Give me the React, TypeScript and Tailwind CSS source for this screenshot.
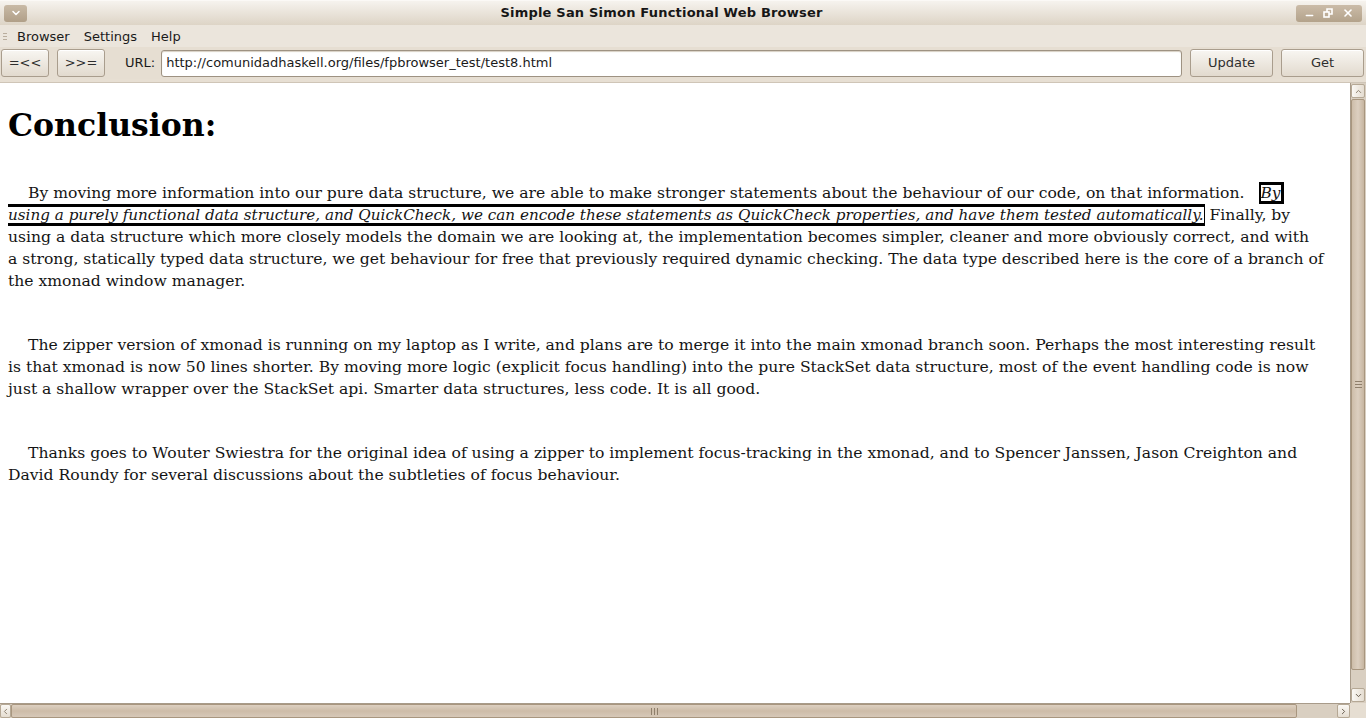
import { ChevronDown, ChevronUp, ChevronLeft, ChevronRight, Minus, X } from 'lucide-react'

const ui = { fontFamily: '"DejaVu Sans", "Liberation Sans", sans-serif' }
const serif = { fontFamily: '"DejaVu Serif", "Liberation Serif", serif' }

const para2 = [
  'The zipper version of xmonad is running on my laptop as I write, and plans are to merge it into the main xmonad branch soon. Perhaps the most interesting result',
  'is that xmonad is now 50 lines shorter. By moving more logic (explicit focus handling) into the pure StackSet data structure, most of the event handling code is now',
  'just a shallow wrapper over the StackSet api. Smarter data structures, less code. It is all good.',
]

const para3 = [
  'Thanks goes to Wouter Swiestra for the original idea of using a zipper to implement focus-tracking in the xmonad, and to Spencer Janssen, Jason Creighton and',
  'David Roundy for several discussions about the subtleties of focus behaviour.',
]

function Btn({ label, className }: { label: string; className: string }) {
  return (
    <button className={`h-[28px] rounded-[3px] border border-[#a99d8d] bg-gradient-to-b from-[#f8f6f2] to-[#e2dace] text-[13px] text-[#2e2e2e] shadow-[inset_0_1px_0_#fff] ${className}`}>
      {label}
    </button>
  )
}

function Line({ children, indent }: { children: React.ReactNode; indent?: boolean }) {
  return <div className={`h-[22px] leading-[22px] whitespace-nowrap ${indent ? 'pl-[20px]' : ''}`}>{children}</div>
}

export default function App() {
  return (
    <div className="w-[1366px] h-[718px] flex flex-col bg-[#e7dfd3] overflow-hidden text-[#1a1a1a]" style={ui}>
      {/* title bar */}
      <div className="h-[25px] flex items-center px-[4px] bg-gradient-to-b from-[#f6f3ee] to-[#ddd4c6] border-t border-[#fbf9f6]">
        <div className="w-[23px] h-[17px] rounded-[3px] bg-gradient-to-b from-[#c9baa6] to-[#b09f88] flex items-center justify-center">
          <ChevronDown size={12} strokeWidth={3} className="text-white" />
        </div>
        <div className="flex-1 text-center text-[13px] font-bold text-[#161616] tracking-[0.2px]">Simple San Simon Functional Web Browser</div>
        <div className="w-[66px] h-[17px] rounded-[3px] bg-gradient-to-b from-[#cbbca8] to-[#b3a28b] flex items-center justify-around px-[4px] text-white">
          <Minus size={11} strokeWidth={3} className="mt-[5px]" />
          <svg width="10" height="10" viewBox="0 0 10 10" fill="none" stroke="white" strokeWidth="1.6">
            <rect x="1" y="4" width="5" height="5" />
            <path d="M4 4V1h5v5H6" />
          </svg>
          <X size={12} strokeWidth={3.2} />
        </div>
      </div>

      {/* menu bar */}
      <div className="h-[22px] flex items-center text-[13px] bg-[#ebe5dc] pt-[1px]">
        <div className="w-[4px] ml-[3px] mr-[10px] flex flex-col gap-[2px]">
          <div className="h-px bg-[#b9ad9d]" />
          <div className="h-px bg-[#b9ad9d]" />
          <div className="h-px bg-[#b9ad9d]" />
        </div>
        <span className="mr-[14px]">Browser</span>
        <span className="mr-[14px]">Settings</span>
        <span>Help</span>
      </div>

      {/* toolbar */}
      <div className="h-[32px] flex items-center gap-[8px] px-[1px] bg-[#e6ded2]">
        <Btn label="=<<" className="w-[48px]" />
        <Btn label=">>=" className="w-[48px]" />
        <span className="ml-[12px] mr-[-2px] text-[13px]">URL:</span>
        <div className="flex-1 h-[27px] rounded-[3px] border border-[#9e9282] bg-white flex items-center px-[4px] text-[13px] shadow-[inset_0_1px_1px_#d8d0c4]">
          http://comunidadhaskell.org/files/fpbrowser_test/test8.html
        </div>
        <Btn label="Update" className="w-[83px] ml-[0px]" />
        <Btn label="Get" className="w-[83px] mr-[1px]" />
      </div>

      {/* content */}
      <div className="flex-1 flex flex-col border-t border-[#cfc5b7] mt-[3px] min-h-0">
        <div className="flex-1 flex min-h-0">
          <div className="flex-1 bg-white px-[8px] pt-[20px] overflow-hidden text-[15.6px] text-[#141414]" style={serif}>
            <h1 className="text-[31.5px] font-bold leading-[44px] text-black">Conclusion:</h1>
            <div className="mt-[35px]">
              <Line indent>
                By moving more information into our pure data structure, we are able to make stronger statements about the behaviour of our code, on that information.
                <span className="inline-block w-[14px]" />
                <span className="italic text-[15.4px] border-t-[3px] border-l-2 border-r-[3px] border-b-[3px] border-black leading-[16px] inline-block">By</span>
              </Line>
              <Line>
                <span className="italic text-[15.2px] border-y-[3px] border-r border-black leading-[16px] inline-block">
                  using a purely functional data structure, and QuickCheck, we can encode these statements as QuickCheck properties, and have them tested automatically.
                </span>{' '}
                Finally, by
              </Line>
              <Line>using a data structure which more closely models the domain we are looking at, the implementation becomes simpler, cleaner and more obviously correct, and with</Line>
              <Line>a strong, statically typed data structure, we get behaviour for free that previously required dynamic checking. The data type described here is the core of a branch of</Line>
              <Line>the xmonad window manager.</Line>
            </div>
            <div className="mt-[42px]">
              {para2.map((l, i) => (
                <Line key={i} indent={i === 0}>{l}</Line>
              ))}
            </div>
            <div className="mt-[42px]">
              {para3.map((l, i) => (
                <Line key={i} indent={i === 0}>{l}</Line>
              ))}
            </div>
          </div>

          {/* vertical scrollbar */}
          <div className="w-[16px] flex flex-col bg-[#d9cfc1] border-l border-[#a89b8a] pr-[1px]">
            <div className="h-[14px] mt-[1px] rounded-[2px] border border-[#b5a895] bg-gradient-to-r from-[#faf8f4] to-[#e5ddd1] flex items-center justify-center">
              <ChevronUp size={9} strokeWidth={2.5} className="text-[#8a7d6c]" />
            </div>
            <div className="flex-1 my-[1px] rounded-[2px] border border-[#a8967f] bg-gradient-to-r from-[#cdbda9] via-[#dccfc0] to-[#c7b6a1] flex items-center justify-center mb-[18px]">
              <div className="flex flex-col gap-[2px] w-[7px]">
                <div className="h-px bg-[#8f7f6b]" />
                <div className="h-px bg-[#8f7f6b]" />
                <div className="h-px bg-[#8f7f6b]" />
              </div>
            </div>
            <div className="h-[14px] mb-[1px] rounded-[2px] border border-[#b5a895] bg-gradient-to-r from-[#faf8f4] to-[#e5ddd1] flex items-center justify-center">
              <ChevronDown size={9} strokeWidth={2.5} className="text-[#5f5446]" />
            </div>
          </div>
        </div>

        {/* horizontal scrollbar */}
        <div className="h-[15px] flex">
          <div className="flex-1 flex bg-[#d9cfc1] border-t border-[#a89b8a]">
            <div className="w-[11px] rounded-[2px] border border-[#b5a895] bg-gradient-to-b from-[#faf8f4] to-[#e5ddd1] flex items-center justify-center">
              <ChevronLeft size={9} strokeWidth={2.5} className="text-[#8a7d6c]" />
            </div>
            <div className="w-[1286px] rounded-[2px] border border-[#a8967f] bg-gradient-to-b from-[#ddd0c1] via-[#cdbca8] to-[#d6c8b8] flex items-center justify-center">
              <div className="flex gap-[2px] h-[7px]">
                <div className="w-px bg-[#8f7f6b]" />
                <div className="w-px bg-[#8f7f6b]" />
                <div className="w-px bg-[#8f7f6b]" />
              </div>
            </div>
            <div className="flex-1" />
            <div className="w-[13px] rounded-[2px] border border-[#b5a895] bg-gradient-to-b from-[#faf8f4] to-[#e5ddd1] flex items-center justify-center">
              <ChevronRight size={9} strokeWidth={2.5} className="text-[#5f5446]" />
            </div>
          </div>
          <div className="w-[16px] bg-[#e6ded2]" />
        </div>
      </div>
    </div>
  )
}
